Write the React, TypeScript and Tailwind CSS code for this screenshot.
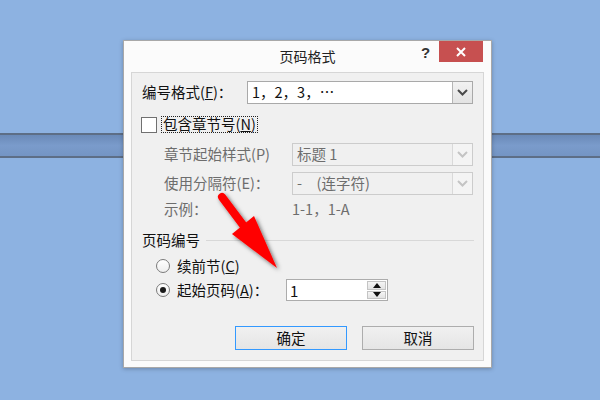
import React from "react";

const font = { fontFamily: '"Noto Sans CJK SC", "Liberation Sans", sans-serif' };

function Chevron({ disabled }: { disabled?: boolean }) {
  return (
    <svg width="11" height="7" viewBox="0 0 11 7">
      <path d="M1 1 L5.5 5.5 L10 1" fill="none" stroke={disabled ? "#c4c4c4" : "#4a4a4a"} strokeWidth="2" />
    </svg>
  );
}

function Combo({ value, disabled, width }: { value: string; disabled?: boolean; width: string }) {
  return (
    <div
      className={`flex h-[23px] ${width} border ${
        disabled ? "border-[#cccccc] bg-[#f0f0f0] text-[#6d6d6d]" : "border-[#a9a9a9] bg-white text-[#111]"
      }`}
    >
      <div className="flex flex-1 items-center pl-[4px] text-[14.5px] leading-none">{value}</div>
      <div
        className={`flex w-[20px] items-center justify-center border-l ${
          disabled ? "border-[#d9d9d9] bg-[#f4f4f4]" : "border-[#b5b5b5] bg-gradient-to-b from-[#f2f2f2] to-[#e3e3e3]"
        }`}
      >
        <Chevron disabled={disabled} />
      </div>
    </div>
  );
}

function Radio({ checked }: { checked?: boolean }) {
  return (
    <div className="flex h-[14px] w-[14px] items-center justify-center rounded-full border border-[#7a7a7a] bg-gradient-to-b from-white to-[#eeeeee]">
      {checked && <div className="h-[6px] w-[6px] rounded-full bg-[#1a1a1a]" />}
    </div>
  );
}

function Arrow() {
  return (
    <svg className="pointer-events-none absolute left-0 top-0" width="600" height="400">
      <defs>
        <filter id="sh" x="-50%" y="-50%" width="200%" height="200%">
          <feDropShadow dx="2" dy="2" stdDeviation="2" floodColor="#000" floodOpacity="0.55" />
        </filter>
      </defs>
      <g filter="url(#sh)" fill="#ff0000">
        <path d="M222 197 L243 225" stroke="#ff0000" strokeWidth="8" strokeLinecap="round" />
        <polygon points="232,234 254,216 277,268" />
      </g>
    </svg>
  );
}

export default function App() {
  return (
    <div className="relative h-[400px] w-[600px] overflow-hidden bg-[#8db2e1]" style={font}>
      {/* desktop stripe */}
      <div className="mt-[133px] h-[25px] border-y-2 border-[#5d6e86] bg-gradient-to-b from-[#6a8ab8] via-[#7a9bcb] to-[#7495c4]" />

      {/* dialog window */}
      <div className="absolute left-[123px] top-[40px] w-[369px] border border-[#a8a8a8] bg-[#fbfbfb] shadow-[0_1px_4px_rgba(0,0,0,0.25)]">
        <div className="relative flex h-[31px] items-center justify-center">
          <span className="text-[14px] text-[#222]">页码格式</span>
          <span className="absolute left-[297px] top-[1px] text-[15px] font-bold text-[#333]" style={{ fontFamily: '"Liberation Sans", sans-serif' }}>
            ?
          </span>
          <div className="absolute right-[8px] top-0 flex h-[21px] w-[44px] items-center justify-center bg-[#c75050]">
            <svg width="10" height="10" viewBox="0 0 10 10">
              <path d="M1 1 L9 9 M9 1 L1 9" stroke="#fff" strokeWidth="2" />
            </svg>
          </div>
        </div>

        <div className="mx-[7px] mb-[6px] border border-[#d6d6d6] bg-[#f0f0f0] px-[9px] pb-[10px] pt-[8px] text-[14.5px] leading-none text-[#111]">
          {/* number format */}
          <div className="flex h-[23px] items-center">
            <div className="w-[106px] pl-[1px]">
              编号格式(<u>F</u>)：
            </div>
            <Combo value="1，2，3，…" width="w-[226px]" />
          </div>

          {/* include chapter */}
          <div className="mt-[12px] flex h-[17px] items-center">
            <div className="h-[16px] w-[16px] border border-[#707070] bg-white" />
            <div className="ml-[4px] flex h-[17px] items-center border border-dotted border-[#222] px-[1px]">
              包含章节号(<u>N</u>)
            </div>
          </div>

          <div className="mt-[10px] flex h-[23px] items-center text-[#6d6d6d]">
            <div className="w-[151px] pl-[23px]">章节起始样式(P)</div>
            <Combo value="标题 1" width="w-[181px]" disabled />
          </div>
          <div className="mt-[6px] flex h-[23px] items-center text-[#6d6d6d]">
            <div className="w-[151px] pl-[23px]">使用分隔符(E)：</div>
            <Combo value="-　(连字符)" width="w-[181px]" disabled />
          </div>
          <div className="mt-[6px] flex h-[16px] items-center text-[#6d6d6d]">
            <div className="w-[151px] pl-[23px]">示例：</div>
            <div>1-1，1-A</div>
          </div>

          {/* page numbering */}
          <div className="mt-[15px] flex h-[16px] items-center">
            <div className="pl-[1px]">页码编号</div>
            <div className="ml-[6px] flex-1 border-t border-[#d8d8d8]" />
          </div>
          <div className="mt-[9px] flex h-[18px] items-center pl-[15px]">
            <Radio />
            <div className="ml-[7px]">
              续前节(<u>C</u>)
            </div>
          </div>
          <div className="mt-[4px] flex h-[22px] items-center pl-[15px]">
            <Radio checked />
            <div className="ml-[7px] w-[109px]">
              起始页码(<u>A</u>)：
            </div>
            <div className="flex h-[22px] w-[102px] border border-[#acacac] bg-white">
              <div className="flex flex-1 items-center pl-[3px] text-[15px]">1</div>
              <div className="my-[1px] mr-[1px] flex w-[19px] flex-col gap-[1px]">
                <div className="flex flex-1 items-center justify-center border border-[#c4c4c4] bg-gradient-to-b from-[#f5f5f5] to-[#e3e3e3]">
                  <svg width="8" height="5" viewBox="0 0 8 5">
                    <path d="M0 5 L4 0 L8 5 Z" fill="#111" />
                  </svg>
                </div>
                <div className="flex flex-1 items-center justify-center border border-[#c4c4c4] bg-gradient-to-b from-[#f5f5f5] to-[#e3e3e3]">
                  <svg width="8" height="5" viewBox="0 0 8 5">
                    <path d="M0 0 L8 0 L4 5 Z" fill="#111" />
                  </svg>
                </div>
              </div>
            </div>
          </div>

          {/* buttons */}
          <div className="mt-[25px] flex h-[24px] justify-end gap-[15px]">
            <button className="flex w-[112px] items-center justify-center border border-[#3399ff] bg-gradient-to-b from-[#f0f0f0] to-[#e5e5e5] text-[14.5px] text-[#111]">
              确定
            </button>
            <button className="flex w-[112px] items-center justify-center border border-[#adadad] bg-gradient-to-b from-[#f0f0f0] to-[#e5e5e5] text-[14.5px] text-[#111]">
              取消
            </button>
          </div>
        </div>
      </div>

      <Arrow />
    </div>
  );
}
